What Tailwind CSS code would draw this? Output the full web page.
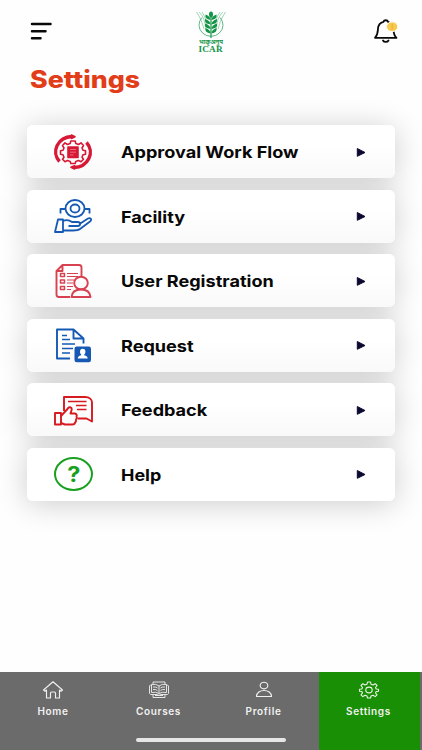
<!DOCTYPE html>
<html lang="en">
<head>
<meta charset="utf-8">
<meta name="viewport" content="width=device-width, initial-scale=1">
<title>Settings</title>
<script src="https://cdn.jsdelivr.net/npm/@tailwindcss/browser@4"></script>
</head>
<body class="bg-[#fefefe] font-['Inter','Liberation_Sans',sans-serif]">
<div class="flex h-[750px] w-[422px] flex-col overflow-hidden">
  <header class="grid h-[60px] shrink-0 grid-cols-[160px_42px_1fr] pl-[30px] pr-[22px]">
    <svg class="mt-[20px] h-[24px] w-[26px]" viewBox="0 0 26 24" stroke="#080808" stroke-width="2.5" stroke-linecap="round"><path d="M2 4H20.500M2 11.200H15.500M2 18.200H10.500"/></svg>
    <div class="mt-[9px] flex w-[42px] flex-col items-center text-[#149447]">
      <svg class="h-[30px] w-[30px] shrink-0" viewBox="2 0 30 30" fill="none" stroke="#149447">
        <path d="M5 3C10 8 11 13 12 21M8 3C12 9 12.500 13 13 19M2.500 3C6 8 8 13 10 20M29 3C24 8 23 13 22 21M26 3C22 9 21.500 13 21 19M31.500 3C28 8 26 13 24 20" stroke-width=".6" opacity=".65"/>
        <path d="M8 8.500A12 11.300 0 1 0 26 8.500" stroke-width=".9" opacity=".75"/>
        <path d="M17 6V29" stroke-width="1.200"/>
        <g fill="#149447" stroke="none"><ellipse cx="17" cy="5.500" rx="2" ry="3"/>
        <path d="M16.500 11Q10.500 10 11.500 5.500Q16.500 7 16.500 11ZM17.500 11Q23.500 10 22.500 5.500Q17.500 7 17.500 11ZM16.500 15.500Q10 14.500 11 10Q16.500 11.500 16.500 15.500ZM17.500 15.500Q24 14.500 23 10Q17.500 11.500 17.500 15.500ZM16.500 20Q10 19 11 14.500Q16.500 16 16.500 20ZM17.500 20Q24 19 23 14.500Q17.500 16 17.500 20ZM16.500 24.500Q10.500 23.500 11.500 19Q16.500 20.500 16.500 24.500ZM17.500 24.500Q23.500 23.500 22.500 19Q17.500 20.500 17.500 24.500Z"/></g>
      </svg>
      <span class="whitespace-nowrap font-['Noto_Sans','Noto_Sans_Devanagari',sans-serif] text-[6px] font-bold leading-[7px]">भाकृअनुप</span>
      <span class="scale-x-[1.150] font-['Liberation_Serif',serif] text-[8px] font-bold leading-[7px] tracking-[.2px]">ICAR</span>
    </div>
    <svg class="mt-[17px] h-[27px] w-[28px] justify-self-end" viewBox="0 0 28 27" fill="none" stroke="#090909" stroke-width="1.800" stroke-linecap="round" stroke-linejoin="round">
      <path d="M3 20.800C6 17.500 5.800 15 6 11.500C6.300 7.500 8.500 5.500 11.500 4.800C12 2.700 15.500 2.700 16 4.800C19.500 5.800 21.500 8 21.500 12C21.500 16 22 18.500 24.500 20.800Z"/>
      <path d="M11 23.500C12 25.400 15.500 25.400 16.500 23.500"/>
      <ellipse cx="20.200" cy="9.700" rx="5.700" ry="4.900" fill="#f7c94e" stroke="#fff" stroke-width="1"/><path d="M20.200 7.500V11.700" stroke="#eab12c" stroke-width="1"/>
    </svg>
  </header>

  <h1 class="ml-[30px] h-[65px] w-fit shrink-0 origin-left scale-x-[1.115] pt-[5px] text-[24px] font-extrabold leading-[30px] text-[#e23d19]">Settings</h1>

  <main class="isolate mx-[27px] flex grow flex-col gap-[11.600px] text-[16px] font-bold text-[#080808]">
    <a class="relative flex h-[53px] w-[368px] items-center rounded-[6px] bg-linear-to-b from-white from-40% to-[#f9f9f9] pl-[26px] before:absolute before:inset-0 before:-z-10 before:rounded-[6px] before:shadow-[0_3px_30px_rgba(0,0,0,.2)]">
      <svg class="h-[40px] w-[40px]" viewBox="0 0 40 40" fill="none" stroke="#d71935" stroke-width="1.600" stroke-linejoin="round">
        <path d="M6.500 29.500A17 15.300 0 0 1 19 4.500" stroke-width="3.400"/><path d="M33.500 10.500A17 15.300 0 0 1 21 35.500" stroke-width="3.400"/>
        <path d="M18.500 3L22 4.700L18.500 6.500ZM21.500 33.700L18 35.300L21.500 37Z" fill="#d71935"/>
        <path d="M17.800 9H22.200L22.800 11.500L25.500 12.500L28 10.900L30.500 13.500L29 16L30 18.200L32.500 18.800V22.200L30 22.800L29 25.200L30.500 27.300L28 29.800L25.500 28.400L22.800 29.400L22.200 31.500H17.800L17.200 29.400L14.500 28.400L12 29.800L9.500 27.300L11 25.200L10 22.800L7.500 22.200V18.800L10 18.200L11 16L9.500 13.500L12 10.900L14.500 12.500L17.200 11.500Z"/>
        <path d="M15 15H25V25.500H15Z" fill="#d71935"/><path d="M17 17.500H23M17 20.200H23M17 23H20.500" stroke="#ef8f9d" stroke-width=".7"/>
      </svg>
      <span class="ml-[28px] origin-left scale-x-[1.130] whitespace-nowrap pt-px">Approval Work Flow</span>
      <svg class="absolute left-[329px] h-[10px] w-[10px]" viewBox="0 0 10 10" fill="#0c0930" stroke="#0c0930" stroke-linejoin="round"><path d="M1.300 1.500L9 5.500L1.300 9.300Z"/></svg>
    </a>
    <a class="relative flex h-[53px] w-[368px] items-center rounded-[6px] bg-linear-to-b from-white from-40% to-[#f9f9f9] pl-[26px] before:absolute before:inset-0 before:-z-10 before:rounded-[6px] before:shadow-[0_3px_30px_rgba(0,0,0,.2)]">
      <svg class="h-[40px] w-[40px]" viewBox="0 0 40 40" fill="none" stroke="#1559b4" stroke-width="1.800" stroke-linejoin="round">
        <ellipse cx="22" cy="12.500" rx="9.500" ry="8.500"/><ellipse cx="22" cy="12.500" rx="4.500" ry="4"/>
        <path d="M7.500 17.500V13H12.500M31.500 13H36.500V17.500"/>
        <path d="M5 23.500H10V36H2Z"/>
        <path d="M10 25C14 23 17 24.500 19 26H24.500C28 26 28 30 24.500 30H15.500M26.500 28L35 22.500C37.500 21.500 39.500 23.500 37 25.500L27 33C25 34.500 23 34.500 20 34.500H10"/>
      </svg>
      <span class="ml-[28px] origin-left scale-x-[1.130] whitespace-nowrap pt-px">Facility</span>
      <svg class="absolute left-[329px] h-[10px] w-[10px]" viewBox="0 0 10 10" fill="#0c0930" stroke="#0c0930" stroke-linejoin="round"><path d="M1.300 1.500L9 5.500L1.300 9.300Z"/></svg>
    </a>
    <a class="relative flex h-[53px] w-[368px] items-center rounded-[6px] bg-linear-to-b from-white from-40% to-[#f9f9f9] pl-[26px] before:absolute before:inset-0 before:-z-10 before:rounded-[6px] before:shadow-[0_3px_30px_rgba(0,0,0,.2)]">
      <svg class="h-[40px] w-[40px]" viewBox="0 0 40 40" fill="none" stroke="#d8414f" stroke-width="1.900" stroke-linejoin="round">
        <path d="M17 36H6Q3.500 36 3.500 33.500V10L9.500 4H26Q28.500 4 28.500 6.500V15M3.500 10H9.500V4"/>
        <path d="M7.500 12.500H11.500V15.500H7.500ZM7.500 19H11.500V22H7.500ZM7.500 25.500H11.500V28.500H7.500Z" stroke-width="1.500"/>
        <path d="M14 12.500H25M14 15.500H25M14 19H21M14 22H20M14 25.500H20M14 28.500H18" stroke-width="1.200"/>
        <ellipse cx="28" cy="22" rx="6.800" ry="6.300"/><path d="M18.500 36C19 30.500 22 28.500 28 28.500S37 30.500 37.500 36Z"/>
      </svg>
      <span class="ml-[28px] origin-left scale-x-[1.130] whitespace-nowrap pt-px">User Registration</span>
      <svg class="absolute left-[329px] h-[10px] w-[10px]" viewBox="0 0 10 10" fill="#0c0930" stroke="#0c0930" stroke-linejoin="round"><path d="M1.300 1.500L9 5.500L1.300 9.300Z"/></svg>
    </a>
    <a class="relative flex h-[53px] w-[368px] items-center rounded-[6px] bg-linear-to-b from-white from-40% to-[#f9f9f9] pl-[26px] before:absolute before:inset-0 before:-z-10 before:rounded-[6px] before:shadow-[0_3px_30px_rgba(0,0,0,.2)]">
      <svg class="h-[40px] w-[40px]" viewBox="0 0 40 40" fill="none" stroke="#1559b4" stroke-width="1.900" stroke-linejoin="round">
        <path d="M17 33.500H4V4.500H20.500L30.500 13.500V18.500M20.500 4.500V13.500H30.500"/>
        <path d="M9 10.500H14M9 14.500H17M9 19H22M9 23.500H20M9 28H17" stroke-width="1.500"/>
        <rect x="21.500" y="21.500" width="16.500" height="15.800" rx="2.200" fill="#1559b4" stroke="none"/>
        <g fill="#fff" stroke="none"><ellipse cx="29.700" cy="26.700" rx="2.700" ry="3"/><path d="M28.200 28H31.200V30.200Q34.700 31 34.700 33.500H24.700Q24.700 31 28.200 30.200Z"/></g>
      </svg>
      <span class="ml-[28px] origin-left scale-x-[1.130] whitespace-nowrap pt-px">Request</span>
      <svg class="absolute left-[329px] h-[10px] w-[10px]" viewBox="0 0 10 10" fill="#0c0930" stroke="#0c0930" stroke-linejoin="round"><path d="M1.300 1.500L9 5.500L1.300 9.300Z"/></svg>
    </a>
    <a class="relative flex h-[53px] w-[368px] items-center rounded-[6px] bg-linear-to-b from-white from-40% to-[#f9f9f9] pl-[26px] before:absolute before:inset-0 before:-z-10 before:rounded-[6px] before:shadow-[0_3px_30px_rgba(0,0,0,.2)]">
      <svg class="h-[40px] w-[40px]" viewBox="0 0 40 40" fill="none" stroke="#d71920" stroke-width="1.900" stroke-linejoin="round">
        <path d="M11 21V7H32C36.500 7 39 9.500 39 12.500V31.500L33.500 28.500H24.500"/>
        <path d="M15 11.500H33.500M23 15.500H33.500M24 19.500H33.500" stroke-width="1.600"/>
        <path d="M2 23H8V34.500H2Z"/><path d="M8 26L14.500 19Q16 16 18.500 18C19.500 19.500 18 21.500 17.500 23.500H22Q24.500 24.500 23.500 26.500Q24.500 28 23 29.500Q23.500 31.500 22 32.500Q22 34.500 19 34.500H12L8 33"/>
      </svg>
      <span class="ml-[28px] origin-left scale-x-[1.130] whitespace-nowrap pt-px">Feedback</span>
      <svg class="absolute left-[329px] h-[10px] w-[10px]" viewBox="0 0 10 10" fill="#0c0930" stroke="#0c0930" stroke-linejoin="round"><path d="M1.300 1.500L9 5.500L1.300 9.300Z"/></svg>
    </a>
    <a class="relative flex h-[53px] w-[368px] items-center rounded-[6px] bg-white pl-[27px] before:absolute before:inset-0 before:-z-10 before:rounded-[6px] before:shadow-[0_3px_30px_rgba(0,0,0,.2)]">
      <div class="flex h-[34px] w-[39px] items-center justify-center rounded-[50%] border-2 border-[#19a01f] text-[21px] font-bold leading-none text-[#19a01f]"><span class="scale-x-[1.120]">?</span></div>
      <span class="ml-[28px] origin-left scale-x-[1.120] whitespace-nowrap pt-px">Help</span>
      <svg class="absolute left-[329px] h-[10px] w-[10px]" viewBox="0 0 10 10" fill="#0c0930" stroke="#0c0930" stroke-linejoin="round"><path d="M1.300 1.500L9 5.500L1.300 9.300Z"/></svg>
    </a>
  </main>

  <nav class="relative grid h-[78px] shrink-0 grid-cols-[106px_105px_108px_101px] bg-[#6b6b6b] text-[10px] font-semibold tracking-[.65px] text-[#f2f2f2]">
    <a class="flex flex-col items-center pt-[8px]">
      <svg class="h-[20px] w-[22px]" viewBox="0 0 22 20" fill="none" stroke="#f0f0f0" stroke-width="1.150" stroke-linejoin="round"><path d="M1.500 10L11 1.800L20.500 10L19 11.200L17.500 10V18H13.500V13Q13.500 12 12.500 12H9.500Q8.500 12 8.500 13V18H4.500V10L3 11.200Z"/></svg>
      <span class="mt-[4px] leading-[14px]">Home</span>
    </a>
    <a class="flex flex-col items-center pt-[8px]">
      <svg class="h-[20px] w-[22px]" viewBox="0 0 22 20" fill="none" stroke="#e4e4e4" stroke-width="1" stroke-linejoin="round"><path d="M5 4.500V2H17V4.500M5 14.500V17.500H17V14.500M7 15.500H15M3.500 5H2.500L1.500 6V13.500L2.500 14.500H9.500L11 15.500L12.500 14.500H19.500L20.500 13.500V6L19.500 5H18.500M3.500 4.500Q8 3.500 11 6Q14 3.500 18.500 4.500V12.500Q14 11.500 11 13.500Q8 11.500 3.500 12.500ZM11 6V13.500M5 7Q7.500 6.500 9.500 8M5 9.500Q7.500 9 9.500 10.500M12.500 8Q14.500 6.500 17 7M12.500 10.500Q14.500 9 17 9.500"/></svg>
      <span class="mt-[4px] leading-[14px]">Courses</span>
    </a>
    <a class="flex flex-col items-center pr-[3px] pt-[8px]">
      <svg class="h-[20px] w-[22px]" viewBox="0 0 22 20" fill="none" stroke="#f0f0f0" stroke-width="1.150" stroke-linejoin="round"><ellipse cx="11" cy="5.500" rx="3.800" ry="3.300"/><path d="M3.500 16.500C3.500 8.500 18.500 8.500 18.500 16.500Z"/></svg>
      <span class="mt-[4px] leading-[14px]">Profile</span>
    </a>
    <a class="flex flex-col items-center bg-[#198f05] pr-[2px] pt-[8px]">
      <svg class="h-[20px] w-[22px]" viewBox="0 0 22 20" fill="none" stroke="#edf5eb" stroke-width="1.100" stroke-linejoin="round"><path d="M9.500 2H12.500L13 4.200L15 5L17.200 3.700L19 5.500L17.500 7.500L18.200 9L20.500 9.300V11.200L18.200 11.500L17.500 13L19 14.900L17.200 16.600L15 15.300L13 16.100L12.500 18H9.500L9 16.100L7 15.300L4.800 16.600L3 14.900L4.500 13L3.800 11.500L1.500 11.200V9.300L3.800 9L4.500 7.500L3 5.500L4.800 3.700L7 5L9 4.200Z"/><ellipse cx="11" cy="10" rx="3.200" ry="2.900"/></svg>
      <span class="mt-[4px] leading-[14px]">Settings</span>
    </a>
    <div class="absolute bottom-[8px] left-[136px] h-[4px] w-[150px] rounded-full bg-[#e6e6e6]"></div>
  </nav>
</div>
</body>
</html>
